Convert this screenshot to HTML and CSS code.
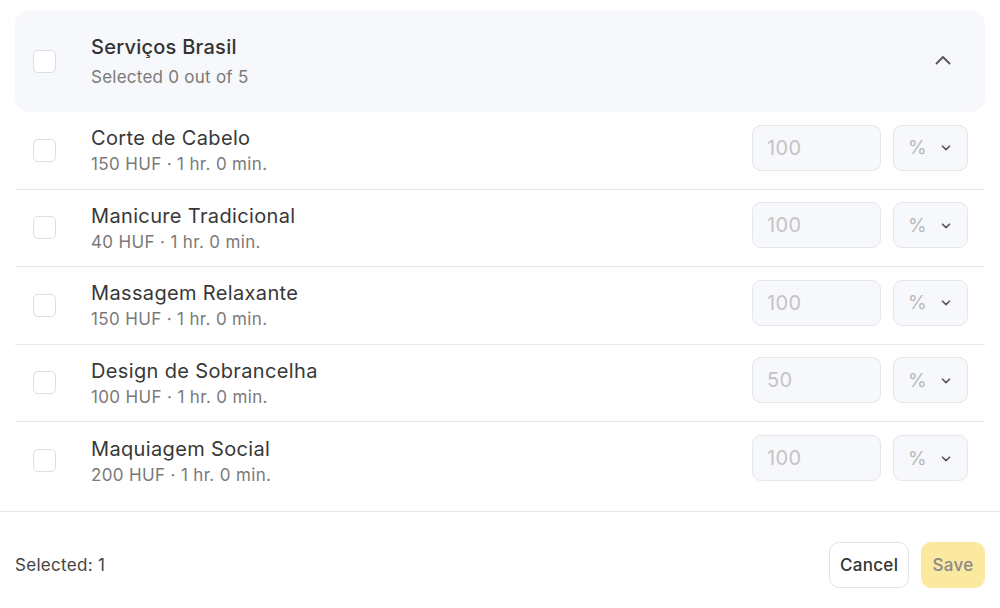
FILE: index.html
```html
<!DOCTYPE html>
<html>
<head>
<meta charset="utf-8">
<link rel="stylesheet" href="styles.css">
</head>
<body>
<div class="panel">
  <div class="list">
    <div class="group">
      <span class="check"></span>
      <div class="info">
        <div class="group-title">Serviços Brasil</div>
        <div class="group-sub">Selected 0 out of 5</div>
      </div>
      <svg class="chev-up" width="16" height="10" viewBox="0 0 16 10"><path d="M1.5 8.5 L8 2 L14.5 8.5" fill="none" stroke="#555" stroke-width="1.8" stroke-linecap="round" stroke-linejoin="round"/></svg>
    </div>
    <div class="row">
      <span class="check"></span>
      <div class="info"><div class="title">Corte de Cabelo</div><div class="sub">150 HUF · 1 hr. 0 min.</div></div>
      <div class="amount">100</div>
      <div class="unit"><span>%</span><svg width="10" height="6" viewBox="0 0 10 6"><path d="M1.5 1.2 L5 4.6 L8.5 1.2" fill="none" stroke="#555" stroke-width="1.6" stroke-linecap="round" stroke-linejoin="round"/></svg></div>
    </div>
    <div class="row">
      <span class="check"></span>
      <div class="info"><div class="title">Manicure Tradicional</div><div class="sub">40 HUF · 1 hr. 0 min.</div></div>
      <div class="amount">100</div>
      <div class="unit"><span>%</span><svg width="10" height="6" viewBox="0 0 10 6"><path d="M1.5 1.2 L5 4.6 L8.5 1.2" fill="none" stroke="#555" stroke-width="1.6" stroke-linecap="round" stroke-linejoin="round"/></svg></div>
    </div>
    <div class="row">
      <span class="check"></span>
      <div class="info"><div class="title">Massagem Relaxante</div><div class="sub">150 HUF · 1 hr. 0 min.</div></div>
      <div class="amount">100</div>
      <div class="unit"><span>%</span><svg width="10" height="6" viewBox="0 0 10 6"><path d="M1.5 1.2 L5 4.6 L8.5 1.2" fill="none" stroke="#555" stroke-width="1.6" stroke-linecap="round" stroke-linejoin="round"/></svg></div>
    </div>
    <div class="row">
      <span class="check"></span>
      <div class="info"><div class="title">Design de Sobrancelha</div><div class="sub">100 HUF · 1 hr. 0 min.</div></div>
      <div class="amount">50</div>
      <div class="unit"><span>%</span><svg width="10" height="6" viewBox="0 0 10 6"><path d="M1.5 1.2 L5 4.6 L8.5 1.2" fill="none" stroke="#555" stroke-width="1.6" stroke-linecap="round" stroke-linejoin="round"/></svg></div>
    </div>
    <div class="row last">
      <span class="check"></span>
      <div class="info"><div class="title">Maquiagem Social</div><div class="sub">200 HUF · 1 hr. 0 min.</div></div>
      <div class="amount">100</div>
      <div class="unit"><span>%</span><svg width="10" height="6" viewBox="0 0 10 6"><path d="M1.5 1.2 L5 4.6 L8.5 1.2" fill="none" stroke="#555" stroke-width="1.6" stroke-linecap="round" stroke-linejoin="round"/></svg></div>
    </div>
  </div>
  <div class="footer">
    <div class="count">Selected: 1</div>
    <div class="actions">
      <button class="btn cancel">Cancel</button>
      <button class="btn save">Save</button>
    </div>
  </div>
</div>
</body>
</html>
```
FILE: styles.css
```css
* { box-sizing: border-box; }
html, body { margin: 0; padding: 0; background: #fff; }
body {
  font-family: Inter, "Noto Sans", sans-serif;
  color: #333;
  width: 1000px;
  height: 608px;
  overflow: hidden;
  letter-spacing: 0.35px;
}
.list {
  padding: 10px 15px 11px;
}
.group {
  display: flex;
  align-items: center;
  height: 102px;
  background: #f7f8fb;
  border-radius: 14px;
  padding: 0 34px 0 18px;
}
.check {
  width: 23px;
  height: 23px;
  border: 1px solid #dcdee3;
  border-radius: 5px;
  background: #fff;
  flex: none;
}
.info {
  flex: 1;
  margin-left: 35px;
}
.group-title {
  font-size: 20px;
  font-weight: 500;
  color: #333;
  line-height: 24px;
  letter-spacing: 0.25px;
}
.group-sub {
  font-size: 17px;
  color: #7a7a7a;
  line-height: 20px;
  margin-top: 8px;
  letter-spacing: 0.25px;
}
.chev-up { flex: none; margin-bottom: 2px; }
.row {
  display: flex;
  align-items: center;
  height: 77.5px;
  border-bottom: 1px solid #e6e7eb;
  padding: 0 17px 0 18px;
}
.row.last { border-bottom: none; }
.row .info { margin-top: 0; }
.title {
  font-size: 20px;
  color: #383838;
  line-height: 24px;
}
.sub {
  font-size: 17px;
  color: #7a7a7a;
  line-height: 20px;
  margin-top: 4px;
}
.amount {
  width: 129px;
  height: 46px;
  border: 1px solid #e4e6ea;
  border-radius: 9px;
  background: #f7f8fb;
  font-size: 20px;
  color: #c4c4c4;
  display: flex;
  align-items: center;
  padding-left: 14px;
  margin-top: -5px;
}
.unit {
  width: 75px;
  height: 46px;
  border: 1px solid #e4e6ea;
  border-radius: 9px;
  background: #f7f8fb;
  margin-left: 12px;
  display: flex;
  align-items: center;
  padding-left: 14px;
  gap: 14px;
  font-size: 19px;
  color: #b8b8b8;
  margin-top: -5px;
}
.unit svg { margin-top: 1px; }
.footer {
  border-top: 1px solid #e4e6ea;
  display: flex;
  align-items: center;
  justify-content: space-between;
  height: 97px;
  padding: 0 15px;
}
.count {
  font-size: 17px;
  color: #444;
  margin-top: 10px;
  letter-spacing: 0.3px;
}
.actions {
  display: flex;
  gap: 12px;
  margin-top: 11px;
}
.btn {
  height: 46px;
  border-radius: 10px;
  font-family: Inter, "Noto Sans", sans-serif;
  font-size: 17px;
  font-weight: 500;
  padding: 0 10px;
  letter-spacing: 0.3px;
}
.cancel {
  background: #fff;
  border: 1px solid #e2e4e9;
  color: #333;
  width: 80px;
}
.save {
  background: #fce9a0;
  border: 1px solid #fce9a0;
  color: #8a8a8a;
  width: 64px;
}
```
